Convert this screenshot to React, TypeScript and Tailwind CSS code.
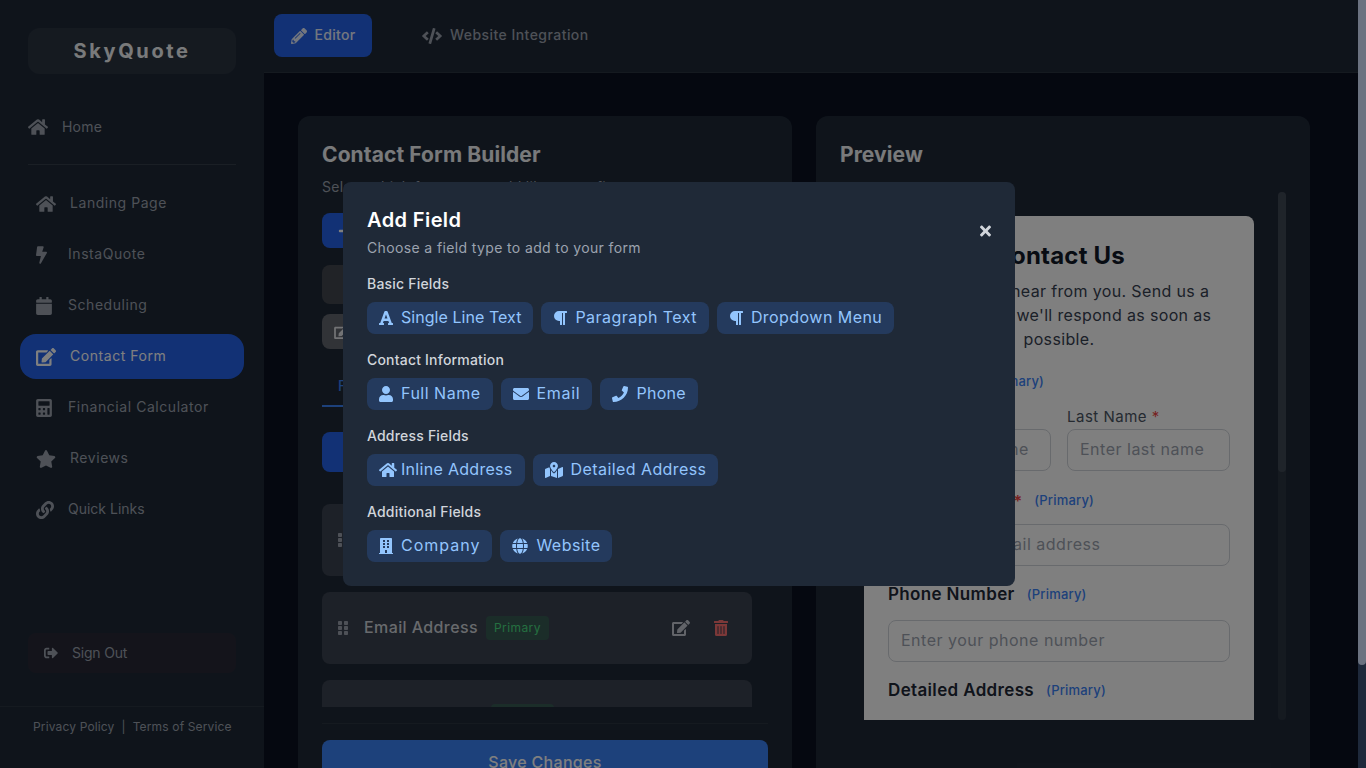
import React from 'react';
import {
  FaBolt, FaBuilding, FaCalculator, FaCalendar, FaCode, FaEdit, FaEnvelope, FaFont, FaGlobe, FaGripVertical,
  FaHome, FaLink, FaMapMarkedAlt, FaParagraph, FaPencilAlt, FaPhone, FaPlus, FaSignOutAlt, FaStar, FaTimes, FaTrashAlt, FaUser,
} from 'react-icons/fa';

const nav = [
  { label: 'Landing Page', icon: FaHome, w: 'w-[20px]', track: 'tracking-[0.55px]' },
  { label: 'InstaQuote', icon: FaBolt, w: 'w-[11px]', track: 'tracking-[0.55px]' },
  { label: 'Scheduling', icon: FaCalendar, w: 'w-[16px]', track: 'tracking-[0.55px]' },
  { label: 'Contact Form', icon: FaEdit, w: 'w-[20px]', track: 'tracking-[0.55px]', active: true },
  { label: 'Financial Calculator', icon: FaCalculator, w: 'w-[16px]', track: 'tracking-[0.55px]' },
  { label: 'Reviews', icon: FaStar, w: 'w-[20px]', track: 'tracking-[0.55px]' },
  { label: 'Quick Links', icon: FaLink, w: 'w-[18px]', track: 'tracking-[0px]' },
];

const groups = [
  { title: 'Basic Fields', items: [
    { label: 'Single Line Text', icon: FaFont, w: 'w-[14px]', track: 'tracking-[0.05px]' },
    { label: 'Paragraph Text', icon: FaParagraph, w: 'w-[14px]', track: 'tracking-[0.45px]' },
    { label: 'Dropdown Menu', icon: FaParagraph, w: 'w-[14px]', track: 'tracking-[0.45px]' },
  ] },
  { title: 'Contact Information', items: [
    { label: 'Full Name', icon: FaUser, w: 'w-[14px]', track: 'tracking-[0.5px]' },
    { label: 'Email', icon: FaEnvelope, w: 'w-[16px]', track: 'tracking-[0.7px]' },
    { label: 'Phone', icon: FaPhone, w: 'w-[16px]', track: 'tracking-[0.3px]' },
  ] },
  { title: 'Address Fields', items: [
    { label: 'Inline Address', icon: FaHome, w: 'w-[18px]', track: 'tracking-[0.3px]', tight: true },
    { label: 'Detailed Address', icon: FaMapMarkedAlt, w: 'w-[18px]', track: 'tracking-[0.42px]' },
  ] },
  { title: 'Additional Fields', items: [
    { label: 'Company', icon: FaBuilding, w: 'w-[14px]', track: 'tracking-[1px]' },
    { label: 'Website', icon: FaGlobe, w: 'w-[16px]', track: 'tracking-[0.45px]' },
  ] },
];

const FieldRow = ({ name }: { name: string }) => (
  <div className="flex h-[72px] w-[430px] shrink-0 items-center rounded-lg bg-[#3b4250] pl-4 pr-6">
    <FaGripVertical className="h-4 w-[10px] text-[#9ca3af]" />
    <span className="mb-[2px] ml-4 text-[16px] font-medium tracking-[0.4px] text-[#d1d5db]">{name}</span>
    <span className="ml-2 rounded bg-[#22c55e]/20 px-2 py-[4px] text-[12px] leading-4 tracking-[0.4px] text-[#4ade80]">Primary</span>
    <FaEdit className="ml-auto h-4 w-[18px] text-[#c4c9d2]" />
    <FaTrashAlt className="ml-6 h-4 w-[14px] text-[#f87171]" />
  </div>
);

const Label = ({ text, req, primary }: { text: string; req?: boolean; primary?: boolean }) => (
  <div className="flex h-6 items-center">
    <span className="text-[17px] font-semibold tracking-[0.35px] text-[#1f2937]">{text}</span>
    {req && <span className="ml-1 text-[16px] font-semibold text-[#ef4444]">*</span>}
    {primary && <span className="ml-3 text-[13px] font-medium tracking-[0.2px] text-[#3b82f6]">(Primary)</span>}
  </div>
);

const Input = ({ placeholder }: { placeholder: string }) => (
  <div className="flex h-[42px] items-center rounded-lg border border-[#d1d5db] px-3 pb-[2px] text-[16px] tracking-[0.5px] text-[#9ca3af]">{placeholder}</div>
);

export default function App() {
  return (
    <div className="flex h-screen overflow-hidden bg-[#0a1120] font-[Inter,'Liberation_Sans',sans-serif]">
      <div className="relative flex min-w-0 flex-1">
        {/* Sidebar */}
        <aside className="flex w-[264px] shrink-0 flex-col bg-[#1f2937]">
          <div className="mx-7 mt-7 flex h-[46px] items-center justify-center rounded-xl bg-white/5 text-[20px] font-bold tracking-[2.6px] text-[#f3f4f6]">SkyQuote</div>
          <div className="mx-7 mt-[30px] flex h-[46px] items-center gap-[14px] text-[14px] tracking-[0.2px] text-[#9ca3af]">
            <FaHome className="h-[18px] w-[20px] text-[#9ca3af]" />
            <span className="mb-[2px]">Home</span>
          </div>
          <div className="mx-7 mt-[14px] border-t border-white/10" />
          <nav className="mt-4 flex flex-col gap-[6px] px-5">
            {nav.map(({ label, icon: Icon, w, track, active }) => (
              <div key={label} className={`flex h-[45px] items-center gap-[14px] rounded-2xl px-4 text-[14px] ${track} ${active ? 'bg-[#2563eb] text-white' : 'text-[#9ca3af]'}`}>
                <span className="flex min-w-[18px] shrink-0"><Icon className={`h-[18px] ${w}`} /></span>
                <span className="mb-[2px]">{label}</span>
              </div>
            ))}
          </nav>
          <div className="mx-7 mt-auto flex h-10 items-center gap-[14px] rounded-lg bg-[#ef4444]/5 pl-4 text-[14px] tracking-[-0.2px] text-[#9ca3af]">
            <FaSignOutAlt className="h-[14px] w-[14px]" />
            <span className="mb-[2px]">Sign Out</span>
          </div>
          <div className="mt-[33px] flex h-[62px] items-start gap-[7px] border-t border-white/5 pl-[33px] pt-[11px] text-[12px] tracking-[0.15px] text-[#9ca3af]">
            <span>Privacy Policy</span><span>|</span><span>Terms of Service</span>
          </div>
        </aside>

        <div className="flex min-w-0 flex-1 flex-col">
          {/* Tabs */}
          <header className="flex h-[73px] shrink-0 items-start border-b border-white/5 bg-[#1f2937] pl-[10px] pt-[14px]">
            <div className="flex h-[43px] w-[98px] items-center justify-center gap-2 rounded-lg bg-[#2563eb] text-[14px] font-medium tracking-[0.3px] text-white/90">
              <FaPencilAlt className="h-4 w-4" />
              <span className="mb-[2px]">Editor</span>
            </div>
            <div className="ml-[50px] flex h-[43px] items-center gap-2 text-[14px] font-medium tracking-[0.45px] text-[#9ca3af]">
              <FaCode className="h-4 w-5" />
              <span className="mb-[2px]">Website Integration</span>
            </div>
          </header>

          <main className="flex min-h-0 flex-1 gap-6 pl-[34px] pr-12 pt-[43px]">
            {/* Builder */}
            <section className="flex w-[494px] shrink-0 flex-col rounded-t-xl bg-[#1f2937] px-6 pt-[23px]">
              <h2 className="text-[21px] font-bold leading-8 tracking-[0.1px] text-[#f3f4f6]">Contact Form Builder</h2>
              <p className="mt-[5px] h-[21px] text-[14px] leading-[21px] tracking-[0.3px] text-[#9ca3af]">Select which form you would like to configure</p>
              <div className="mt-4 flex h-[35px] w-[200px] shrink-0 items-center rounded-lg bg-[#2563eb] px-4 text-white"><FaPlus className="h-[14px] w-[14px]" /></div>
              <div className="mt-[17px] h-[39px] w-[430px] shrink-0 rounded-lg bg-[#43474f]" />
              <div className="mt-[10px] flex h-[35px] w-[200px] shrink-0 items-center rounded-lg bg-[#63666f] px-3 text-[#e5e7eb]"><FaEdit className="h-[14px] w-4" /></div>
              <div className="mt-[18px] h-10 w-[430px] shrink-0 border-b-2 border-[#3b82f6] pl-4 text-[14px] font-medium leading-[38px] text-[#3b82f6]">Form Fields</div>
              <div className="mt-[25px] h-10 w-[200px] shrink-0 rounded-lg bg-[#2563eb]" />
              <div className="mt-8 flex h-[203px] shrink-0 flex-col gap-4 overflow-hidden">
                <FieldRow name="Full Name" />
                <FieldRow name="Email Address" />
                <FieldRow name="Phone Number" />
              </div>
              <div className="mt-4 border-t border-white/5 pt-4">
                <div className="flex h-11 items-center justify-center rounded-lg bg-[#3b82f6] text-[16px] font-medium tracking-[0.3px] text-white">Save Changes</div>
              </div>
            </section>

            {/* Preview */}
            <section className="flex w-[494px] shrink-0 flex-col rounded-t-xl bg-[#1f2937] pl-6 pr-6 pt-[23px]">
              <h2 className="text-[21px] font-bold leading-8 tracking-[0.1px] text-[#f3f4f6]">Preview</h2>
              <div className="mt-[21px] flex h-[528px] shrink-0">
                <div className="min-w-0 flex-1 overflow-hidden px-6 pt-6">
                  <div className="h-[600px] rounded-t-lg bg-white px-6 pt-6 text-center">
                    <h3 className="text-[24px] font-bold leading-8 tracking-[0.2px] text-[#111827]">Contact Us</h3>
                    <p className="mt-[7px] text-[16px] leading-6 tracking-[0.35px] text-[#374151]">We'd love to hear from you. Send us a message and we'll respond as soon as possible.</p>
                    <div className="mt-[19px] text-left">
                      <Label text="Full Name" primary />
                      <div className="mt-[13px] flex gap-4">
                        <div className="flex-1">
                          <div className="h-5 text-[15px] leading-5 tracking-[0.5px] text-[#4b5563]">First Name <span className="text-[#ef4444]">*</span></div>
                          <div className="mt-[2px]"><Input placeholder="Enter first name" /></div>
                        </div>
                        <div className="flex-1">
                          <div className="h-5 text-[15px] leading-5 tracking-[0.5px] text-[#4b5563]">Last Name <span className="text-[#ef4444]">*</span></div>
                          <div className="mt-[2px]"><Input placeholder="Enter last name" /></div>
                        </div>
                      </div>
                      <div className="mt-[18px]"><Label text="Email Address" req primary /></div>
                      <div className="mt-[11px]"><Input placeholder="Enter your email address" /></div>
                      <div className="mt-[17px]"><Label text="Phone Number" primary /></div>
                      <div className="mt-[13px]"><Input placeholder="Enter your phone number" /></div>
                      <div className="mt-[17px]"><Label text="Detailed Address" primary /></div>
                    </div>
                  </div>
                </div>
                <div className="w-2 shrink-0 rounded-full bg-white/5">
                  <div className="h-[280px] rounded-full bg-white/10" />
                </div>
              </div>
            </section>
          </main>
        </div>

        {/* Add field dialog */}
        <div className="absolute inset-0 flex items-center justify-center bg-black/50">
          <div className="relative h-[404px] w-[672px] rounded-lg bg-[#1f2937] p-6">
            <FaTimes className="absolute right-6 top-[41px] h-4 w-[11px] text-[#d1d5db]" />
            <h2 className="text-[20px] font-semibold leading-7 tracking-[0.4px] text-white">Add Field</h2>
            <p className="mt-1 text-[14px] leading-5 tracking-[0.37px] text-[#9ca3af]">Choose a field type to add to your form</p>
            <div className="mt-4 flex flex-col gap-[16px]">
              {groups.map(group => (
                <div key={group.title}>
                  <div className="text-[14px] font-medium leading-5 tracking-[0.2px] text-[#d1d5db]">{group.title}</div>
                  <div className="mt-2 flex gap-2">
                    {group.items.map(({ label, icon: Icon, w, track, tight }) => (
                      <div key={label} className={`flex h-8 items-center rounded-lg bg-[#3b82f6]/20 px-3 text-[16px] text-[#93c5fd] ${track} ${tight ? 'gap-1' : 'gap-2'}`}>
                        <Icon className={`h-4 shrink-0 ${w}`} />
                        <span className="mb-[2px]">{label}</span>
                      </div>
                    ))}
                  </div>
                </div>
              ))}
            </div>
          </div>
        </div>
      </div>

      {/* Page scrollbar */}
      <div className="w-2 shrink-0 bg-[#1e293b]">
        <div className="h-[665px] rounded-b-full bg-[#6b7280]" />
      </div>
    </div>
  );
}
